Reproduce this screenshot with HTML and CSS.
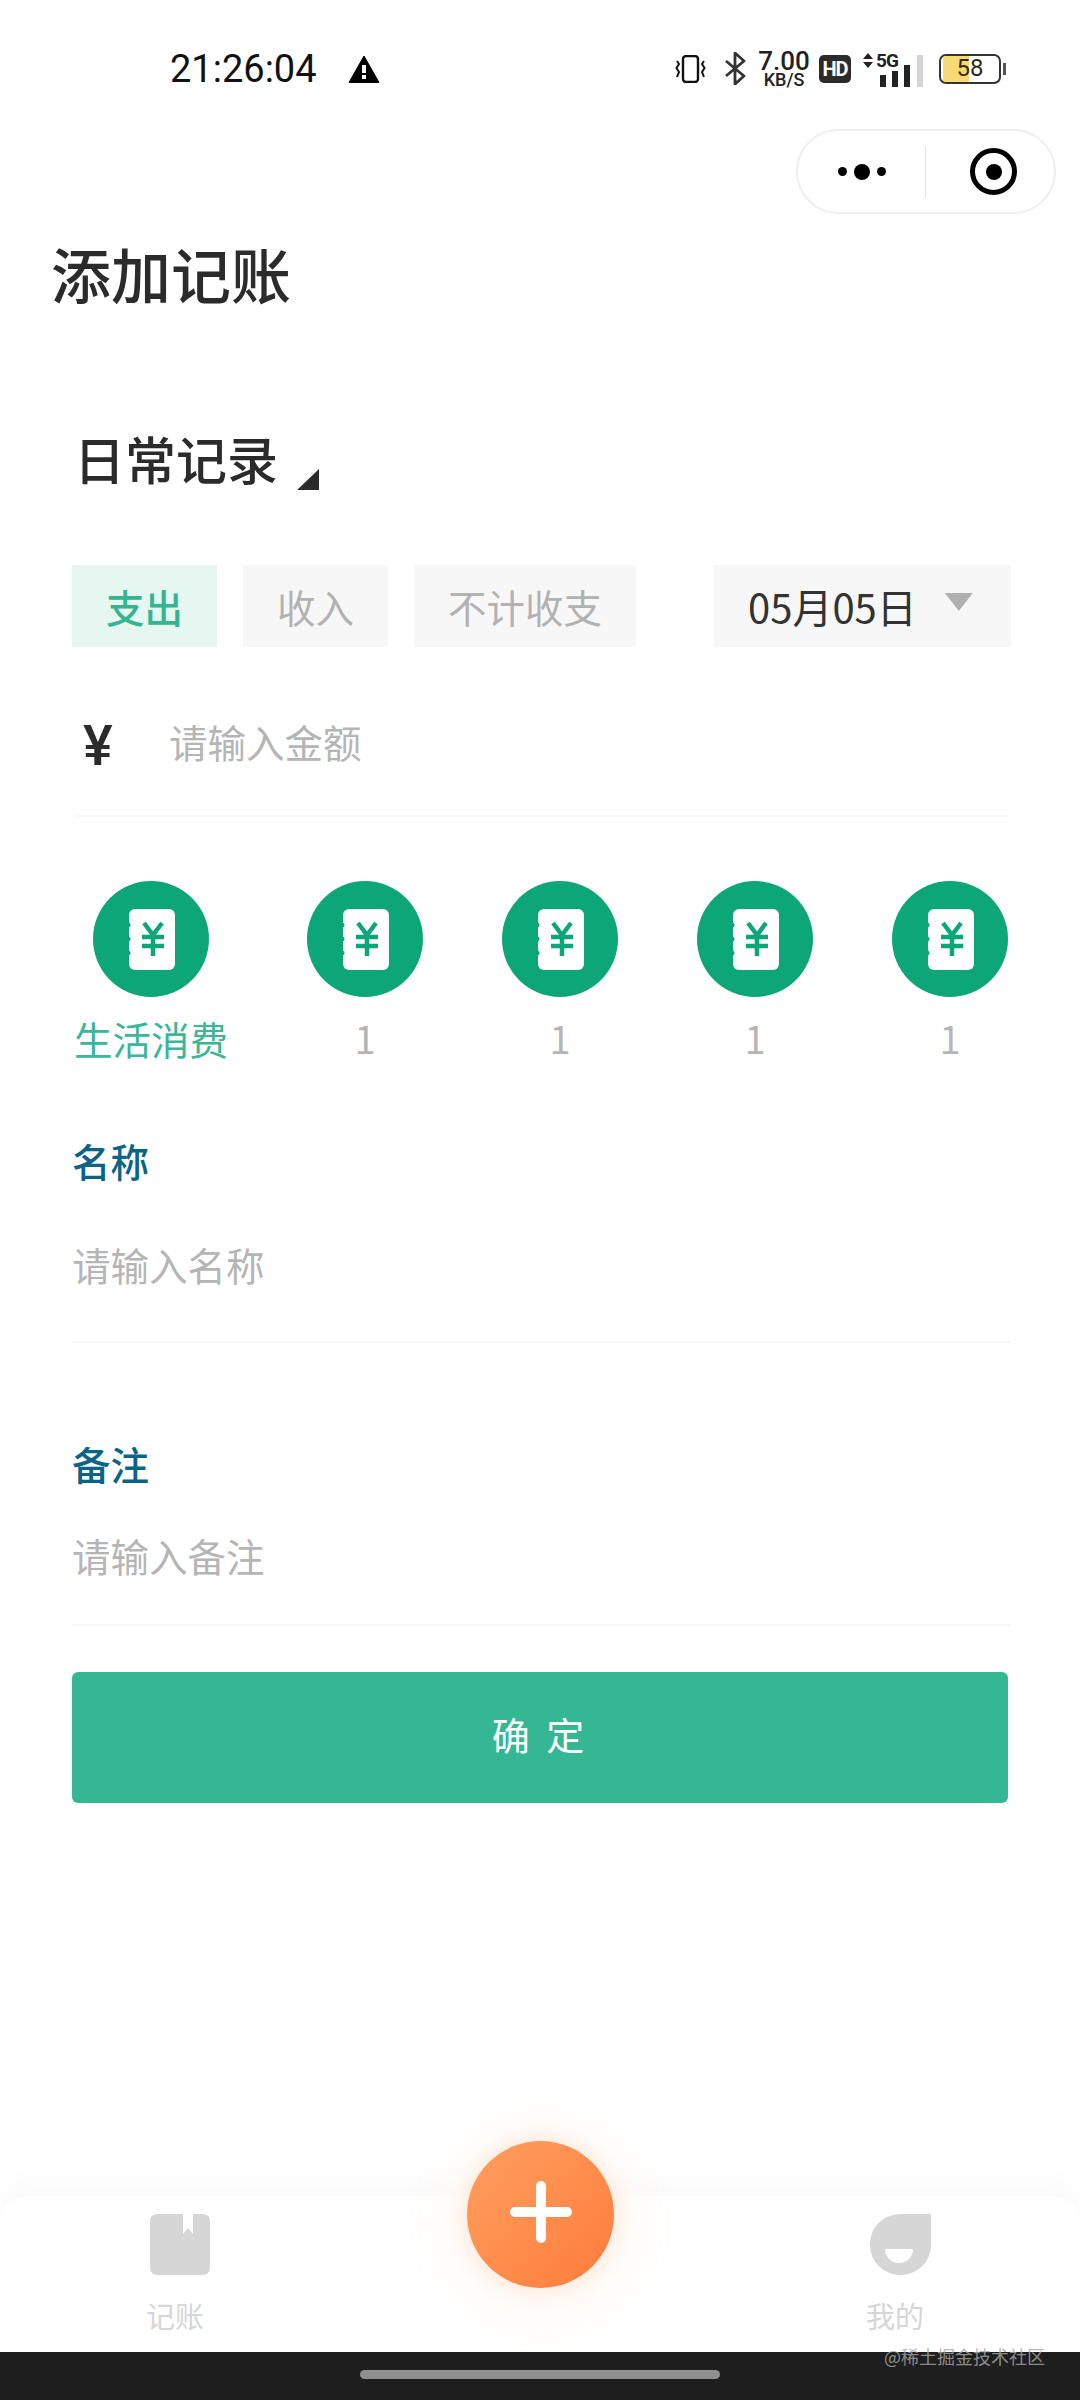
FILE: index.html
```html
<!DOCTYPE html>
<html lang="zh-CN">
<head>
    <meta charset="UTF-8">
    <meta name="viewport" content="width=device-width, initial-scale=1.0">
    <title>添加记账</title>
    <link rel="stylesheet" href="styles.css">
</head>
<body>
    <svg class="defs" width="0" height="0">
        <symbol id="ledger" viewBox="0 0 116 116">
            <circle cx="58" cy="58" r="58" fill="#0ca678"/>
            <rect x="36" y="28" width="46" height="61" rx="6" fill="#fff"/>
            <circle cx="35" cy="44" r="2.500" fill="#0ca678"/>
            <circle cx="35" cy="58" r="2.500" fill="#0ca678"/>
            <circle cx="35" cy="72" r="2.500" fill="#0ca678"/>
            <path d="M51 42 L60 54 L69 42 M60 54 V75 M49 56 H71 M49 65 H71" fill="none" stroke="#0ca678" stroke-width="4.5"/>
        </symbol>
    </svg>

    <!-- status bar -->
    <div class="status">
        <span class="time">21:26:04</span>
        <svg class="warn" width="32" height="28" viewBox="0 0 31 28">
            <path d="M15.5 1 L30.5 27.5 H0.5 Z" fill="#000" stroke="#000" stroke-linejoin="round"/>
            <rect x="13.5" y="10" width="4" height="8" fill="#fff"/>
            <rect x="13.5" y="20" width="4" height="4" fill="#fff"/>
        </svg>
        <div class="status-right">
            <svg width="31" height="28" viewBox="0 0 31 28">
                <rect x="8" y="1" width="15" height="26" rx="3" fill="none" stroke="#111" stroke-width="2.4"/>
                <path d="M2 6 L4 9 L1.5 13 L4 17 L2 22 M29 6 L27 9 L29.500 13 L27 17 L29 22" fill="none" stroke="#111" stroke-width="2"/>
            </svg>
            <svg class="bt" width="21" height="33" viewBox="0 0 21 33">
                <path d="M1 9 L19 24 L10 32 V1 L19 9 L1 24" fill="none" stroke="#333" stroke-width="2.8" stroke-linejoin="round"/>
            </svg>
            <div class="speed">
                <span class="speed-num">7.00</span>
                <span class="speed-unit">KB/S</span>
            </div>
            <span class="hd">HD</span>
            <div class="signal">
                <svg class="arrows" width="10" height="15" viewBox="0 0 10 15">
                    <path d="M5 0 L10 6 H0 Z M0 9 H10 L5 15 Z" fill="#222"/>
                </svg>
                <span class="five-g">5G</span>
                <svg class="bars" width="45" height="32" viewBox="0 0 45 32">
                    <rect x="0" y="20" width="6" height="12" fill="#222"/>
                    <rect x="12" y="16" width="6" height="16" fill="#222"/>
                    <rect x="24" y="10" width="6" height="22" fill="#222"/>
                    <rect x="37" y="0" width="6" height="32" fill="#d4d4d4"/>
                </svg>
            </div>
            <div class="battery">
                <div class="battery-fill"></div>
                <span class="battery-num">58</span>
            </div>
            <div class="battery-nub"></div>
        </div>
    </div>

    <div class="capsule-row">
        <div class="capsule">
            <div class="dots">
                <i class="dot"></i>
                <i class="dot dot-big"></i>
                <i class="dot"></i>
            </div>
            <div class="capsule-line"></div>
            <div class="target"><i></i></div>
        </div>
    </div>

    <div class="page-title">添加记账</div>

    <div class="book">
        <span>日常记录</span>
        <i class="corner"></i>
    </div>

    <div class="tabs">
        <div class="tab tab-on">支出</div>
        <div class="tab">收入</div>
        <div class="tab tab-wide">不计收支</div>
        <div class="date">
            <span>05月05日</span>
            <i class="caret"></i>
        </div>
    </div>

    <div class="amount">
        <span class="yen">¥</span>
        <span class="hint">请输入金额</span>
    </div>

    <div class="cats">
        <div class="cat cat-on">
            <svg class="cat-icon"><use href="#ledger"/></svg>
            <span>生活消费</span>
        </div>
        <div class="cat">
            <svg class="cat-icon"><use href="#ledger"/></svg>
            <span>1</span>
        </div>
        <div class="cat">
            <svg class="cat-icon"><use href="#ledger"/></svg>
            <span>1</span>
        </div>
        <div class="cat">
            <svg class="cat-icon"><use href="#ledger"/></svg>
            <span>1</span>
        </div>
        <div class="cat">
            <svg class="cat-icon"><use href="#ledger"/></svg>
            <span>1</span>
        </div>
    </div>

    <div class="field field-name">
        <div class="field-label">名称</div>
        <div class="field-input hint">请输入名称</div>
    </div>

    <div class="field field-note">
        <div class="field-label">备注</div>
        <div class="field-input hint">请输入备注</div>
    </div>

    <div class="submit">确 定</div>

    <!-- bottom tabs -->
    <div class="tabbar">
        <div class="bar-item">
            <svg width="60" height="61" viewBox="0 0 60 61">
                <path d="M8 0 H33 V20 L38 14 L43 20 V0 H52 Q60 0 60 8 V53 Q60 61 52 61 H8 Q0 61 0 53 V8 Q0 0 8 0 Z" fill="#d6d6d6"/>
            </svg>
            <span>记账</span>
        </div>
        <div class="bar-item">
            <svg width="61" height="61" viewBox="0 0 61 61">
                <path d="M61 0 V31 A30.500 30 0 0 1 0 31 C0 12 14 0 32 0 Z" fill="#d6d6d6"/>
                <path d="M15 35 H43 A14 14 0 0 1 15 35 Z" fill="#fff"/>
            </svg>
            <span>我的</span>
        </div>
        <div class="fab">
            <svg width="62" height="62" viewBox="0 0 62 62">
                <path d="M31 5 V57 M5 31 H57" stroke="#fff" stroke-width="10" stroke-linecap="round"/>
            </svg>
        </div>
    </div>

    <div class="navbar">
        <div class="home-pill"></div>
        <span class="watermark">@稀土掘金技术社区</span>
    </div>
</body>
</html>
```

FILE: styles.css
```css
* {
    box-sizing: border-box;
}

body {
    margin: 0;
    width: 1080px;
    height: 2400px;
    display: flex;
    flex-direction: column;
    background: #fff;
    color: #2b2b2b;
    font-family: "Noto Sans CJK SC", "Noto Sans", sans-serif;
    overflow: hidden;
}

.defs {
    position: absolute;
}

/* status bar */
.status {
    display: flex;
    align-items: center;
    height: 37px;
    margin-top: 50px;
    padding: 0 74px 0 170px;
}

.time {
    font-family: Roboto, sans-serif;
    font-size: 38px;
    color: #111;
}

.warn {
    margin-left: 31px;
}

.status-right {
    display: flex;
    align-items: center;
    margin-left: auto;
}

.bt {
    margin-left: 19px;
}

.speed {
    display: flex;
    flex-direction: column;
    align-items: center;
    width: 48px;
    margin-left: 14px;
    font-family: Roboto, sans-serif;
    color: #222;
}

.speed-num {
    font-size: 26px;
    font-weight: 500;
    line-height: 22px;
}

.speed-unit {
    font-size: 18px;
    font-weight: 500;
    line-height: 16px;
}

.hd {
    width: 32px;
    height: 28px;
    margin-left: 11px;
    border-radius: 5px;
    background: #2b2b2b;
    color: #fff;
    font-family: Roboto, sans-serif;
    font-size: 20px;
    font-weight: 700;
    line-height: 28px;
    text-align: center;
    letter-spacing: -1px;
}

.signal {
    position: relative;
    width: 60px;
    height: 32px;
    margin-left: 12px;
}

.arrows {
    position: absolute;
    left: 0;
    top: 0;
}

.five-g {
    position: absolute;
    left: 13px;
    top: -2px;
    font-family: Roboto, sans-serif;
    font-size: 19px;
    font-weight: 700;
    line-height: 19px;
    letter-spacing: -1px;
    color: #222;
}

.bars {
    position: absolute;
    left: 17px;
    top: 2px;
}

.battery {
    position: relative;
    width: 62px;
    height: 30px;
    margin-left: 16px;
    border: 2.5px solid #333;
    border-radius: 7px;
    overflow: hidden;
}

.battery-fill {
    width: 26px;
    height: 100%;
    margin-left: 2px;
    background: #f8d976;
}

.battery-num {
    position: absolute;
    left: 0;
    right: 0;
    top: 0;
    font-family: Roboto, sans-serif;
    font-size: 24px;
    line-height: 25px;
    text-align: center;
    color: #332b12;
}

.battery-nub {
    width: 3px;
    height: 12px;
    margin-left: 2px;
    background: #555;
}

/* wechat capsule */
.capsule-row {
    display: flex;
    justify-content: flex-end;
    margin-top: 42px;
    padding-right: 24px;
}

.capsule {
    display: flex;
    align-items: center;
    width: 260px;
    height: 85px;
    border: 2px solid #eeeeee;
    border-radius: 43px;
}

.dots {
    display: flex;
    align-items: center;
    justify-content: center;
    gap: 7px;
    width: 127px;
}

.dot {
    width: 9px;
    height: 9px;
    border-radius: 50%;
    background: #000;
}

.dot-big {
    width: 16px;
    height: 16px;
}

.capsule-line {
    width: 1px;
    height: 50px;
    background: #e4e4e4;
}

.target {
    display: flex;
    align-items: center;
    justify-content: center;
    width: 47px;
    height: 47px;
    margin-left: 44px;
    border: 5.5px solid #000;
    border-radius: 50%;
}

.target i {
    width: 16px;
    height: 16px;
    border-radius: 50%;
    background: #000;
}

.page-title {
    margin-top: 19px;
    padding-left: 51px;
    font-size: 60px;
    font-weight: 500;
    line-height: 80px;
}

.book {
    display: flex;
    align-items: flex-start;
    height: 70px;
    margin-top: 110px;
    padding-left: 74px;
    font-size: 51px;
    font-weight: 500;
    line-height: 70px;
}

.corner {
    width: 22px;
    height: 21px;
    margin: 46px 0 0 19px;
    background: #2b2b2b;
    clip-path: polygon(100% 0, 100% 100%, 0 100%);
}

.tabs {
    display: flex;
    height: 82px;
    margin-top: 72px;
    padding: 0 69px 0 72px;
    gap: 26px;
}

.tab {
    width: 145px;
    background: #f7f7f7;
    color: #b2b2b2;
    font-size: 38.500px;
    line-height: 82px;
    text-align: center;
}

.tab-wide {
    width: 222px;
}

.tab-on {
    background: #e6f7f1;
    color: #34b592;
    font-weight: 500;
}

.date {
    display: flex;
    align-items: center;
    width: 297px;
    margin-left: auto;
    padding-left: 34px;
    background: #f7f7f7;
    font-size: 40px;
    color: #333;
}

.caret {
    width: 28px;
    height: 18px;
    margin: 0 0 8px 28px;
    background: #b0b0b0;
    clip-path: polygon(0 0, 100% 0, 50% 100%);
}

.amount {
    display: flex;
    align-items: center;
    height: 112px;
    margin: 58px 70px 0 76px;
    padding-bottom: 32px;
    border-bottom: 2px solid #f6f6f6;
}

.yen {
    width: 93px;
    padding: 4px 0 0 7px;
    font-family: Roboto, sans-serif;
    font-size: 56px;
    font-weight: 500;
    line-height: 80px;
}

.hint {
    color: #b5b5b5;
    font-size: 38.500px;
}

.amount .hint {
    padding-bottom: 6px;
}

.cats {
    display: flex;
    gap: 79px;
    margin-top: 64px;
    padding-left: 74px;
}

.cat {
    display: flex;
    flex-direction: column;
    align-items: center;
    width: 116px;
    color: #b5b5b5;
    font-size: 38px;
    line-height: 50px;
}

.cat-on {
    width: 154px;
    font-size: 38.500px;
    color: #3ab795;
    white-space: nowrap;
}

.cat-icon {
    width: 116px;
    height: 116px;
    margin-bottom: 16px;
}

.field {
    margin-left: 72px;
    margin-right: 70px;
    border-bottom: 2px solid #f6f6f6;
}

.field-name {
    margin-top: 72px;
    padding-bottom: 52px;
}

.field-note {
    margin-top: 95px;
    padding-bottom: 44px;
}

.field-label {
    color: #0a6488;
    font-size: 38.500px;
    font-weight: 500;
    line-height: 50px;
}

.field-input {
    line-height: 50px;
}

.field-name .field-input {
    margin-top: 54px;
}

.field-note .field-input {
    margin-top: 42px;
}

.submit {
    height: 131px;
    margin: 46px 72px 0;
    border-radius: 6px;
    background: #36b793;
    color: #fff;
    font-size: 38px;
    line-height: 124px;
    text-align: center;
    letter-spacing: 4px;
}

/* bottom tabs */
.tabbar {
    position: relative;
    display: flex;
    justify-content: space-between;
    height: 156px;
    margin-top: auto;
    padding: 18px 125px 0 115px;
    border-radius: 26px 26px 0 0;
    background: #fff;
    box-shadow: 0 -14px 30px rgba(0, 0, 0, 0.025);
}

.bar-item {
    display: flex;
    flex-direction: column;
    align-items: center;
    width: 120px;
    color: #d6d6d6;
    font-size: 29px;
    line-height: 40px;
}

.bar-item span {
    margin-top: 20px;
}

.bar-item svg {
    margin-left: 10px;
}

.fab {
    position: absolute;
    left: 467px;
    top: -55px;
    display: flex;
    align-items: center;
    justify-content: center;
    width: 147px;
    height: 147px;
    border-radius: 50%;
    background: linear-gradient(135deg, #ff9f60, #ff7c3b);
    box-shadow: 0 0 22px rgba(255, 170, 120, 0.3), 0 10px 40px 26px rgba(255, 250, 246, 0.95);
}

.fab svg {
    margin-bottom: 6px;
}

.navbar {
    position: relative;
    display: flex;
    justify-content: center;
    height: 48px;
    padding-top: 18px;
    background: #1e1e1e;
}

.home-pill {
    width: 360px;
    height: 9px;
    border-radius: 5px;
    background: #8f8f8f;
}

.watermark {
    position: absolute;
    right: 35px;
    top: -10px;
    color: #a8a8a8;
    font-size: 18px;
    line-height: 28px;
    opacity: 0.8;
}
```
